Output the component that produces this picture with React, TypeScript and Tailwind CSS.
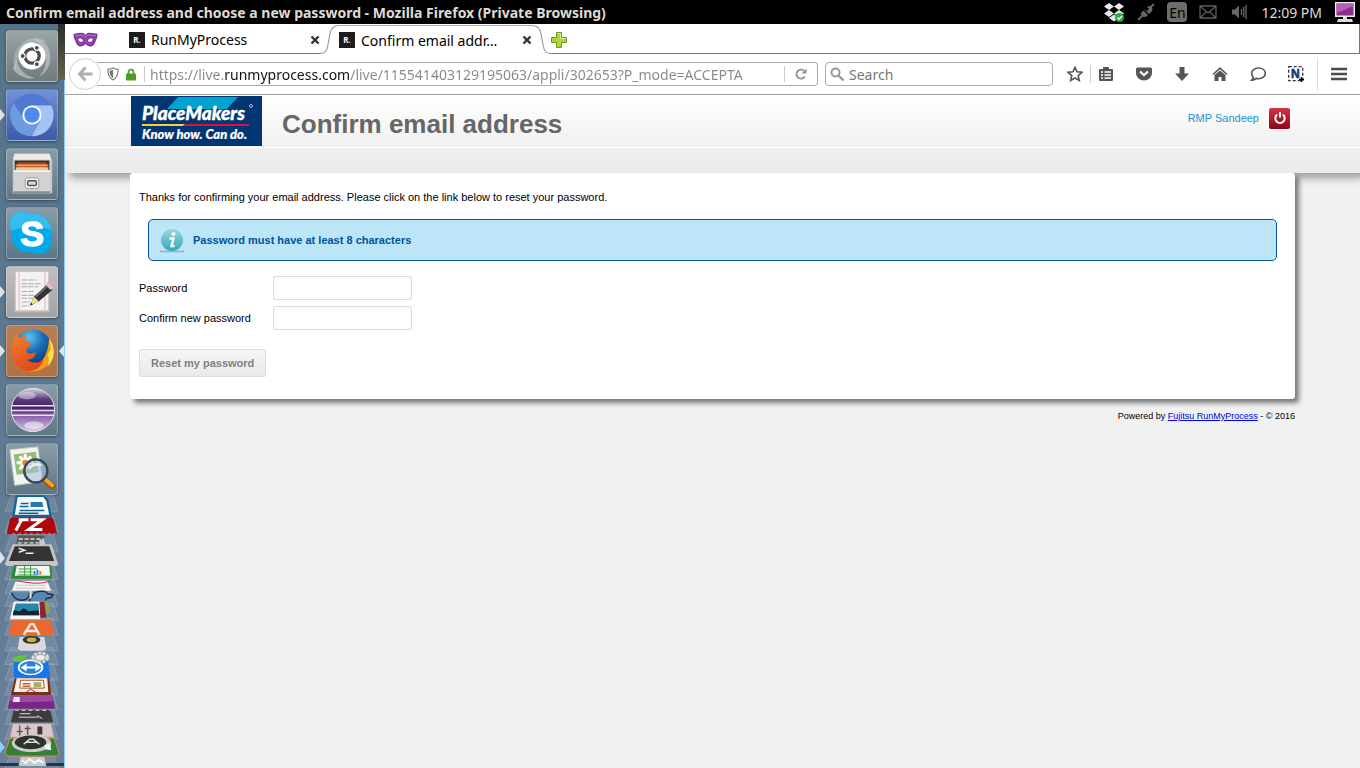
import { useState } from "react";
import type { ReactNode } from "react";

const glassTile = "from-[#8b9ca8] to-[#5d7787]";

function UbuntuIcon() {
  return (
    <svg viewBox="0 0 52 52" className="size-full">
      <path d="M26 8c13 0 20 9 19 22-1 9-6 15-12 18 6-7 8-12 7-20C39 17 33 12 26 8z" fill="#c9cfd0" opacity=".6" />
      <path d="M9 42C4 30 8 17 20 10c8-4 16-3 22 2-9-2-15-1-21 4-9 7-11 15-12 26z" fill="#c9cfd0" opacity=".45" />
      <path d="M10 30c2 10 9 17 20 19-9 2-19-2-24-10z" fill="#d7dbdb" opacity=".5" />
      <circle cx="26" cy="26" r="14" fill="#fff" />
      <circle cx="26" cy="26" r="7.500" fill="none" stroke="#4d4d4d" strokeWidth="3.400" />
      <g fill="#4d4d4d" stroke="#fff" strokeWidth="1.200">
        <circle cx="16.300" cy="26" r="2.600" />
        <circle cx="31" cy="17.500" r="2.600" />
        <circle cx="31" cy="34.500" r="2.600" />
      </g>
    </svg>
  );
}

function ChromiumIcon() {
  return (
    <svg viewBox="0 0 52 52" className="size-full">
      <circle cx="26" cy="26" r="22" fill="#6796de" />
      <path d="M26 4A22 22 0 0 1 46 16H26L16 27 7 14A22 22 0 0 1 26 4z" fill="#4f7ad0" />
      <path d="M26 16h20a22 22 0 0 1-20 32l9-17z" fill="#a5c3f5" />
      <path d="M7 14a22 22 0 0 0 18 34l9-15-18-4z" fill="#6e9ae0" />
      <circle cx="26" cy="26" r="10" fill="#fff" />
      <circle cx="26" cy="26" r="8" fill="#4f8af0" />
    </svg>
  );
}

function FilesIcon() {
  return (
    <svg viewBox="0 0 52 52" className="size-full">
      <path d="M8 5h36l3 7v34H6V12z" fill="#c9c9c9" />
      <path d="M8 5h36l2 6H6z" fill="#ececec" />
      <path d="M8 12h36v12H8z" fill="#3a3532" />
      <path d="M11 14h30v9H11z" fill="#b04a16" />
      <path d="M9 16h34v2H9z" fill="#f7a256" />
      <path d="M9 19h34v3H9z" fill="#f5c795" />
      <path d="M7 22h38v24H7z" fill="#d3d2d1" />
      <path d="M7 22h38v2H7z" fill="#f4f4f4" />
      <path d="M7 44h38v2H7z" fill="#8d8d8d" />
      <rect x="19" y="30" width="14" height="11" rx="2" fill="#f3f3f3" stroke="#999" />
      <rect x="21.500" y="33" width="9" height="5" rx="1" fill="#ddd" stroke="#555" strokeWidth="1.500" />
    </svg>
  );
}

function SkypeIcon() {
  return (
    <svg viewBox="0 0 52 52" className="size-full">
      <path d="M15 4c4 0 6 1 8 2 14-2 25 8 23 22 3 9-2 20-13 20-4 0-6-1-8-2C12 48 3 38 5 24 0 14 6 4 15 4z" fill="#00a9ea" />
      <path d="M15 4c4 0 6 1 8 2 12-2 22 6 23 17C34 18 18 18 5 24 0 14 6 4 15 4z" fill="#35bdf2" />
      <text x="26" y="39" textAnchor="middle" fontFamily="Liberation Sans, Arial, sans-serif" fontWeight="700" fontSize="37" fill="#fff" stroke="#fff" strokeWidth="1.400">S</text>
    </svg>
  );
}

function EditorIcon() {
  return (
    <svg viewBox="0 0 52 52" className="size-full">
      <rect x="8" y="5" width="36" height="42" fill="#bcbcbc" />
      <rect x="9" y="5" width="34" height="40" fill="#f3f3f1" />
      <path d="M12.500 5v40M39.500 5v40" stroke="#e0b3bb" />
      <path
        d="M15 13.500h16M15 17.500h20M15 20.500h18M15 25.500h14M15 29.500h19M15 32.500h12M15 36.500h9M15 40.500h8"
        stroke="#a9a9a9"
        strokeDasharray="6 1"
      />
      <path d="m24 40 4-9 14-13 5 6-14 12z" fill="#333" />
      <path d="m30 31 13-12" stroke="#777" strokeWidth="1.500" />
      <path d="m40 18 3-3 5 6-3 3z" fill="#c9ccd0" />
      <path d="m42 16 1-1c3-1 6 3 5 5l-1 1z" fill="#eba0c0" />
      <path d="m24 40 4-9 5 5z" fill="#e9e48a" />
      <path d="m24 40 1-3 2 2z" fill="#222" />
    </svg>
  );
}

function FirefoxIcon() {
  return (
    <svg viewBox="0 0 52 52" className="size-full">
      <defs>
        <radialGradient id="globe" cx=".4" cy=".2" r=".8">
          <stop offset="0" stopColor="#5fc4ec" />
          <stop offset=".45" stopColor="#1b6fb8" />
          <stop offset="1" stopColor="#0b2f66" />
        </radialGradient>
        <linearGradient id="fox" x1="0" y1="0" x2=".4" y2="1">
          <stop offset="0" stopColor="#f08030" />
          <stop offset="1" stopColor="#e04d1c" />
        </linearGradient>
      </defs>
      <circle cx="27" cy="24" r="20" fill="url(#globe)" />
      <path d="M44 12c7 11 5 24-4 31-9 6-22 6-30-1 11 3 24 0 29-10 4-7 4-13 5-20z" fill="#f39a1c" />
      <path d="M44 14c7 8 6 21-2 28 2-5 2-9 0-12 4-5 4-9 2-16z" fill="#fde14b" />
      <path d="M9 8c1 3 3 4 6 4 2-2 4-3 6-2-2 3-2 5 0 7 3 0 5 2 3 4-2 1-4 2-4 5 2 4 6 3 10 1-1 6-4 8-9 8 4 4 12 4 17 0-2 8-9 12-17 12C9 46 2 32 6 17c1-4 2-6 3-9z" fill="url(#fox)" />
    </svg>
  );
}

function EclipseIcon() {
  return (
    <svg viewBox="0 0 52 52" className="size-full">
      <defs>
        <linearGradient id="eclipse" x1="0" y1="0" x2="0" y2="1">
          <stop offset="0" stopColor="#ded3ea" />
          <stop offset=".25" stopColor="#5b3a7e" />
          <stop offset=".45" stopColor="#42246a" />
          <stop offset=".65" stopColor="#8b66ad" />
          <stop offset="1" stopColor="#dccbe8" />
        </linearGradient>
      </defs>
      <circle cx="27" cy="26" r="22.500" fill="url(#eclipse)" stroke="#e6deef" />
      <path d="M5 21.500h44M4 26.500h46M5 31.500h44" stroke="#e9e1f2" strokeWidth="1.600" />
      <ellipse cx="21" cy="11" rx="9" ry="4" fill="#fff" opacity=".4" />
      <ellipse cx="28" cy="42" rx="10" ry="4" fill="#fff" opacity=".5" />
    </svg>
  );
}

function ViewerIcon() {
  return (
    <svg viewBox="0 0 52 52" className="size-full">
      <path d="m3 6 29-3 5 36-29 4z" fill="#f3f4ef" stroke="#c8ccc8" />
      <path d="m7 11 23-3 3 21-23 3z" fill="#94b978" />
      <g fill="none" stroke="#fff" strokeWidth="3.500" strokeLinecap="round">
        <path d="M19 12v15M11.500 19.500h15M14 14l10 11M24 14 14 25" />
      </g>
      <circle cx="19" cy="19.500" r="3.200" fill="#e08a2c" />
      <path d="m39 37 8 7" stroke="#9c5a12" strokeWidth="7" strokeLinecap="round" />
      <path d="m40 37 7 6" stroke="#f0a53a" strokeWidth="4" strokeLinecap="round" />
      <circle cx="30" cy="28" r="12" fill="#a9bfd8" fillOpacity=".6" stroke="#3a4754" strokeWidth="2.500" />
      <path d="M22 26c3-7 11-8 16-3-6-1-11 0-16 3z" fill="#fff" opacity=".7" />
    </svg>
  );
}

const launchers = [
  { name: "Dash", icon: <UbuntuIcon />, tile: "from-[#9aa5a8] to-[#707b7c]" },
  { name: "Chromium", icon: <ChromiumIcon />, tile: "from-[#7590d6] to-[#3c5ba8]", running: true },
  { name: "Files", icon: <FilesIcon />, tile: glassTile },
  { name: "Skype", icon: <SkypeIcon />, tile: glassTile },
  { name: "Text Editor", icon: <EditorIcon />, tile: "from-[#c0c0c2] to-[#a3a3a5]", running: true },
  { name: "Firefox", icon: <FirefoxIcon />, tile: "from-[#b97e56] to-[#b07242]", running: true, focused: true },
  { name: "Eclipse", icon: <EclipseIcon />, tile: glassTile },
  { name: "Image Viewer", icon: <ViewerIcon />, tile: glassTile },
];

// launcher entries folded up at the bottom of the bar
const foldTops = [493, 514, 533, 547, 562, 576, 589, 603, 618, 634, 648, 664, 679, 694, 709, 724, 739, 754];

function FoldedStack() {
  return (
    <svg viewBox="0 495 65 273" className="h-[273px] w-full shrink-0" role="img" aria-label="More applications">
      {foldTops.map((y) => (
        <path key={y} d={`M11 ${y}h43l5 17H5z`} fill="#c6d6e2" fillOpacity=".14" stroke="#c6d6e2" strokeOpacity=".25" />
      ))}
      {/* writer */}
      <path d="M16 493h28l5 4 4 20H12z" fill="#17608f" />
      <path d="M18 495h26l3 4 3 14H15z" fill="#f5fafc" />
      <path d="M21 501.500h8M20 504.500h9M20 508.500h25M19 511.500h20" stroke="#17608f" strokeWidth="1.500" />
      <path d="M31 500h12l1 5H31z" fill="#2a7aa8" />
      {/* filezilla */}
      <path d="m10 517 2-1h41l2 3 3 14-3-2-2 2-3-2-3 2-3-2-3 2-3-2-3 2-3-2-3 2-3-2-3 2-3-2-3 2-3-2-3 2-4-1z" fill="#b0060c" />
      <path d="M19 518h10M22 518l-6 11M31 518h12l-14 10h14" fill="none" stroke="#fff" strokeWidth="3" />
      {/* calculator */}
      <path d="M18 534h27l2 12H16z" fill="#55585a" />
      <path d="M19 537.500h26M18 541.500h28" stroke="#b8bbbc" strokeWidth="2" strokeDasharray="4 2" />
      <path d="M40 538h5l1 6h-6z" fill="#b9cfdc" />
      {/* terminal */}
      <path d="M13 543h39l7 20-2 2H7l-2-2z" fill="#c6c6c6" />
      <path d="M15 545h35l5 15H9z" fill="#333" />
      <path d="m19 547 6 2-6 2M26 552h8" fill="none" stroke="#eee" strokeWidth="1.500" />
      {/* calc */}
      <path d="M14 564h38l1 14H11z" fill="#2f8a35" />
      <path d="M17 565h33l1 10H15z" fill="#f1f7ef" />
      <path d="M19 568h19M19 571h19M18 574h20M25 565v10M31 565v10" stroke="#3c9b3f" />
      <path d="M33 569h10v5H33z" fill="#fff" />
      <path d="M34 574v-4h2v4zM37 574v-5h2v5z" fill="#2f80c0" />
      <path d="M40 574v-4h2v4z" fill="#f07a1c" />
      {/* document viewer */}
      <path d="M16 580h32l4 10H12z" fill="#f5f3f2" />
      <path d="M15 580c12 1 24 5 36 0" fill="none" stroke="#d3262c" />
      <path d="M17 584.500h29M16 587.500h30" stroke="#c8c8c8" />
      {/* database client */}
      <path d="M12 592c2 7 9 9 14 7 3-1 4-4 4-7" fill="#5b86ad" stroke="#17344f" strokeWidth="1.500" />
      <path d="M35 592c5-2 12-2 13 1l6 1-2 3-5 1-2 8H33l-3-6z" fill="#5b86ad" stroke="#17344f" strokeWidth="1.500" />
      <path d="M31 590v8" stroke="#dfe8f0" strokeWidth="2" />
      {/* shotwell */}
      <path d="m40 601 8-1 4 12-10 5z" fill="#8f9f55" />
      <path d="m38 602 7-1 2 16-8 1z" fill="#8c2530" />
      <path d="M14 601h26l1 18H10z" fill="#f5f5f5" />
      <path d="M16 603h23l1 12H13z" fill="#2686ad" />
      <path d="m13 615 1-5 6 1 4-3 5 3 10-1 1 5z" fill="#13252f" />
      {/* software center */}
      <path d="M12 620h40l3 16H9z" fill="#e9692c" />
      <path d="m24 635 7-11h3l6 11M26 631h12" fill="none" stroke="#f9e9df" strokeWidth="2.500" />
      {/* sound recorder */}
      <path d="M20 637h25l2 12-3 2H21l-3-2z" fill="#dadada" />
      <ellipse cx="32" cy="640" rx="9" ry="4" fill="#333" />
      <ellipse cx="32" cy="640" rx="5" ry="2.500" fill="#c7b53f" />
      {/* teamviewer */}
      <path d="M14 661h35l2 19-37-2z" fill="#1577e6" />
      <path d="M12 660c5-6 9-3 15-5-1 5-6 9-13 7z" fill="#62c63c" />
      <ellipse cx="31" cy="668" rx="13" ry="8" fill="#fff" />
      <ellipse cx="31" cy="668" rx="11" ry="6.500" fill="#2583dc" />
      <path d="m21 668 6-4v3h9v-3l6 4-6 4v-3h-9v3z" fill="#fff" />
      <ellipse cx="41" cy="658" rx="7" ry="4" fill="none" stroke="#d9d9d9" strokeWidth="4" strokeDasharray="3 1" />
      <ellipse cx="41" cy="658" rx="5" ry="3" fill="#eee" stroke="#aaa" />
      {/* impress */}
      <path d="M15 679h35l2 17H11z" fill="#7a3019" />
      <path d="M17 679h31l1 14H14z" fill="#f7efe9" />
      <path d="M21 681h23l1 8H20z" fill="#fff" stroke="#a9502c" />
      <path d="M23 684.500h8M23 687h8" stroke="#c5602c" strokeWidth="1.500" />
      <path d="M34 683h8v5h-8z" fill="#a4b45d" />
      <path d="m27 693 4-3 5 3" fill="none" stroke="#7a3019" />
      {/* workspace */}
      <path d="M11 696h42l3 14H8z" fill="#7a2685" />
      <path d="M11 696h42l1 6c-14 1-28 2-44 0z" fill="#9c4aa5" />
      <path d="M14 698h6v5h-7z" fill="#f7e6f7" />
      {/* video editor */}
      <path d="M14 711h37l3 13H11z" fill="#3a3c3e" />
      <path d="M15 711.500h36" stroke="#e9e9e9" strokeDasharray="4 3" />
      <path d="M20 715h11M19 718.500h20M38 717l5 3" stroke="#dedede" />
      {/* settings */}
      <path d="M13 725h39l3 14H10z" fill="#d9c8c9" stroke="#a99697" />
      <path d="M20 727v10M28 727v10M17 733h6M25 730h6" stroke="#5d5355" strokeWidth="1.500" />
      <path d="M38 728h5v8h-5z" fill="#363636" />
      {/* updater */}
      <path d="M10 740h45l5 15-2 3H7l-2-3z" fill="#348038" stroke="#d28a45" />
      <ellipse cx="32" cy="745" rx="20" ry="9" fill="#c9ccc9" />
      <ellipse cx="31" cy="744" rx="16" ry="7" fill="#2f3330" />
      <path d="m24 746 6-5h4l6 5M27 744h10" fill="none" stroke="#ddd" strokeWidth="1.500" />
      <path d="m45 747 6-2 1 7-6-1z" fill="#f5f5f5" />
      {/* trash */}
      <path d="M21 759h24l2 9H19z" fill="#c7cbca" />
      <path d="m22 762 4 3 4-4 5 4 5-3 4 3" fill="none" stroke="#f5f5f5" strokeWidth="2" />
      <path d="M0 765h19v3H0zM47 765h18v3H47z" fill="#2b3440" />
      <path d="m0 550 5 7-5 6z" fill="#dde3e7" />
      <path d="m0 743 5 6-5 6z" fill="#8fd0fa" />
    </svg>
  );
}

function Launcher() {
  return (
    <aside className="relative flex w-[65px] shrink-0 flex-col border-r border-[#8ecbff] bg-linear-to-b from-[#53748a] to-[#687f99]">
      {/* bit of wallpaper showing through */}
      <span className="absolute top-0 -right-px h-14 w-[7px] bg-linear-to-b from-[#2b2d2b] to-[#66644f]" />
      <div className="flex flex-col items-center gap-[7px] pt-1.5">
        {launchers.map((app) => (
          <div key={app.name} className="flex h-[52px] w-full items-center justify-between">
            <svg viewBox="0 0 5 14" className="h-3.5 w-[5px]">
              {app.running && <path d="m0 1 5 6-5 6z" fill="#dde3e7" />}
            </svg>
            <button
              aria-label={app.name}
              className={`size-[52px] overflow-hidden rounded border border-white/25 bg-linear-to-b shadow-[0_1px_3px_rgba(0,0,0,0.4)] ${app.tile}`}
            >
              {app.icon}
            </button>
            <svg viewBox="0 0 5 14" className="h-3.5 w-[5px]">
              {app.focused && <path d="M5 1 0 7l5 6z" fill="#dde3e7" />}
            </svg>
          </div>
        ))}
      </div>
      <FoldedStack />
    </aside>
  );
}

function MenuBar() {
  return (
    <header className="flex h-6 shrink-0 items-center bg-black pr-1 pl-1.5 text-[#dfdbd2]">
      <h1 className="flex-1 truncate text-[14px] font-bold">
        Confirm email address and choose a new password - Mozilla Firefox (Private Browsing)
      </h1>
      <div className="flex items-center">
        <svg viewBox="0 0 22 22" className="mr-3 size-[22px]">
          <path
            d="m6 2 5 3.500L6 9 1 5.500zM16 2l5 3.500L16 9l-5-3.500zM6 9l5 3.500L6 16l-5-3.500zM16 9l5 3.500-5 3.500-5-3.500zM6 17l5-3.500 5 3.500-5 3.500z"
            fill="#e8e8e8"
          />
          <circle cx="16.500" cy="16.500" r="4.500" fill="#2da83a" />
          <path d="m14.500 16.500 1.500 1.700 3-3.200" fill="none" stroke="#fff" strokeWidth="1.300" />
        </svg>
        <svg viewBox="0 0 18 18" className="mr-3 size-[18px]">
          <path d="M1 17 5 13M13 5l4-4" stroke="#686868" strokeWidth="1.800" />
          <path d="m4 10 4-4 2 2 2-2-2-2 2-1c3 0 4 3 3 5l-5 5c-2 2-5 1-6-1z" fill="#686868" />
          <path d="m6 6 6 6" stroke="#000" strokeWidth="1.500" />
        </svg>
        <span className="mr-3 flex h-5 w-5 items-center justify-center rounded-sm bg-[#6d6d6d] text-[14px] text-black">En</span>
        <svg viewBox="0 0 18 14" className="mr-3.5 h-3.5 w-[18px]" fill="none" stroke="#5e5e5e" strokeWidth="1.300">
          <path d="M1 1h16v12H1zM2 2l7 6 7-6M2 12l5-5M16 12l-5-5" />
        </svg>
        <svg viewBox="0 0 16 16" className="mr-3.5 size-4">
          <path d="M1 5.500h3l4-4v13l-4-4H1z" fill="#686868" />
          <path d="M10.500 5v6M12.800 3v10M15 1v14" stroke="#686868" strokeWidth="1.300" />
        </svg>
        <span className="mr-3 text-[14px] text-[#dcdcdc]">12:09 PM</span>
        <svg viewBox="0 0 22 22" className="size-[22px]">
          <rect x="1" y="1" width="20" height="15" fill="#eee" />
          <rect x="2.500" y="2.500" width="17" height="12" fill="#8c2f8c" />
          <path d="M2.500 2.500h17v3c-7 1-10 5-17 6z" fill="#b264b0" />
          <path d="M9 16h4v2h5l1 3H3l1-3h5z" fill="#ddd" />
        </svg>
      </div>
    </header>
  );
}

function Favicon() {
  return (
    <span className="flex size-4 shrink-0 items-center justify-center bg-[#1c1c1c] text-[8px] leading-none font-bold text-white">
      R<span className="text-[#e0b020]">.</span>
    </span>
  );
}

function TabClose() {
  return (
    <button aria-label="Close tab" className="shrink-0">
      <svg viewBox="0 0 10 10" className="size-2.5" stroke="#333" strokeWidth="2.400">
        <path d="m1.500 1.500 7 7M8.500 1.500l-7 7" />
      </svg>
    </button>
  );
}

function TabStrip() {
  return (
    <div className="flex h-[30px] text-[14px] text-black">
      <div className="flex w-[255px] items-center border-b border-[#777] pt-0.5">
        <svg viewBox="0 0 26 18" className="mr-[31px] ml-2 h-[18px] w-[25px]">
          <path d="M1 3c3 0 5-1 8-1 2 0 3 1 4 2 1-1 2-2 4-2 3 0 5 1 8 1 0 3-1 5-2 7-1 4-3 6-6 5-2 0-3-2-4-2s-2 2-4 2c-3 1-5-1-6-5C2 8 1 6 1 3z" fill="#8e3fb0" stroke="#5c2480" />
          <path d="M2 4c3 1 5-1 8 0 1 0 2 1 3 2 1-1 2-2 3-2 3-1 5 1 8 0" fill="none" stroke="#c07bdb" />
          <path d="M5 8c2-2 5-1 6 2-2 2-5 2-6-2zM21 8c-2-2-5-1-6 2 2 2 5 2 6-2z" fill="#fff" stroke="#5c2480" strokeWidth=".7" />
        </svg>
        <Favicon />
        <span className="ml-1.5 flex-1">RunMyProcess</span>
        <TabClose />
      </div>
      <svg viewBox="0 0 19 30" className="h-[30px] w-[19px]" fill="none" stroke="#9aa0a8" strokeWidth="1.200">
        <path d="M0 29.500c6 0 7-3 8-9l2-11c1-5 3-8 9-8" />
      </svg>
      <div className="mt-px flex w-[193px] items-center border-t border-[#aaa]">
        <Favicon />
        <span className="ml-1.5 flex-1">Confirm email addr…</span>
        <TabClose />
      </div>
      <svg viewBox="0 0 19 30" className="h-[30px] w-[19px]" fill="none" stroke="#9aa0a8" strokeWidth="1.200">
        <path d="M19 29.500c-6 0-7-3-8-9l-2-11c-1-5-3-8-9-8" />
      </svg>
      <div className="flex flex-1 items-center border-r border-b border-[#777] pt-0.5">
        <button aria-label="New tab">
          <svg viewBox="0 0 16 16" className="size-4">
            <path d="M5.500.5h5v5h5v5h-5v5h-5v-5h-5v-5h5z" fill="#b2d235" stroke="#6d9a20" />
            <path d="M6.500 1.500h3v5h5" fill="none" stroke="#dcec9a" />
          </svg>
        </button>
      </div>
    </div>
  );
}

function ToolButton({ label, children }: { label: string; children: ReactNode }) {
  return (
    <button aria-label={label} className="flex w-[38px] shrink-0 justify-center">
      <svg viewBox="0 0 16 16" className="size-4" fill="#555">
        {children}
      </svg>
    </button>
  );
}

function NavBar() {
  const [url, setUrl] = useState("https://live.runmyprocess.com/live/115541403129195063/appli/302653?P_mode=ACCEPTA");

  return (
    <div className="flex h-[41px] items-center border-b border-[#aaa] pl-1 text-[14px]">
      <button aria-label="Back" className="z-10 -mr-1 flex size-8 shrink-0 items-center justify-center rounded-full border border-[#d0d0d0] bg-white">
        <svg viewBox="0 0 16 16" className="size-4" fill="none" stroke="#b0b0b0" strokeWidth="3">
          <path d="M8.500 1.500 2.500 8l6 6.500M3 8h12.500" />
        </svg>
      </button>
      <div className="flex h-6 flex-1 items-center rounded-r-sm border border-l-0 border-[#aaa]">
        <svg viewBox="0 0 14 16" className="ml-2.5 h-3.5 w-3 shrink-0">
          <path d="M7 1c2 1 4 1.500 6 1.500 0 6-1 10-6 12.500C2 12.500 1 8.500 1 2.500 3 2.500 5 2 7 1z" fill="#fff" stroke="#777" strokeWidth="1.300" />
          <path d="M7 3v10C4 11 3 8 3 4c2 0 3-.5 4-1z" fill="#777" />
        </svg>
        <svg viewBox="0 0 10 13" className="ml-[7px] h-[13px] w-2.5 shrink-0">
          <path d="M2.500 6V4a2.500 2.500 0 0 1 5 0v2" fill="none" stroke="#4b9a28" strokeWidth="1.700" />
          <rect y="5.500" width="10" height="7" rx="1" fill="#4b9a28" />
        </svg>
        <span className="ml-2 h-4 w-px bg-[#ccc]" />
        {/* the domain part of the address is darker than the rest */}
        <input
          aria-label="Address"
          value={url}
          onChange={(e) => setUrl(e.target.value)}
          className="ml-[5px] min-w-0 flex-1 bg-[linear-gradient(90deg,#888_74px,#111_74px,#111_199px,#888_199px)] bg-clip-text text-transparent outline-none"
        />
        <span className="h-4 w-px bg-[#ccc]" />
        <button aria-label="Reload" className="px-2.5">
          <svg viewBox="0 0 12 12" className="size-3">
            <path d="M9.800 8.500A4.500 4.500 0 1 1 9 2.800" fill="none" stroke="#8b97a5" strokeWidth="1.900" />
            <path d="M11.500.5v5h-5z" fill="#8b97a5" />
          </svg>
        </button>
      </div>
      <div className="ml-[7px] flex h-6 w-[228px] items-center rounded-sm border border-[#aaa] pl-1">
        <svg viewBox="0 0 14 14" className="size-3.5 shrink-0" fill="none" stroke="#999">
          <circle cx="5.500" cy="5.500" r="4" strokeWidth="2" />
          <path d="m8.500 8.500 5 5" strokeWidth="2.400" />
        </svg>
        <input type="search" aria-label="Search" placeholder="Search" className="ml-[5px] min-w-0 flex-1 outline-none placeholder:text-[#777]" />
      </div>
      <div className="ml-[3px] flex items-center pr-0.5">
        <ToolButton label="Bookmark this page">
          <path d="m8 1.300 2 4.500 4.900.5-3.700 3.300 1.100 4.900L8 12l-4.300 2.500 1.100-4.900L1.100 6.300 6 5.800z" fill="none" stroke="#555" strokeWidth="1.600" />
        </ToolButton>
        <span className="-mx-1 h-[18px] w-px bg-[#ccc]" />
        <ToolButton label="Bookmarks">
          <path d="M2 3h3V1.500A1 1 0 0 1 6 1h4a1 1 0 0 1 1 .5V3h3a1 1 0 0 1 1 1v10a1 1 0 0 1-1 1H2a1 1 0 0 1-1-1V4a1 1 0 0 1 1-1z" />
          <path d="M3 6h2M6.500 6H13M3 9h2M6.500 9H13M3 12h2M6.500 12H13" stroke="#fff" strokeWidth="1.700" />
        </ToolButton>
        <ToolButton label="Pocket">
          <path d="M1.500 1.500h13A1.500 1.500 0 0 1 16 3v4A8 7.500 0 0 1 0 7V3a1.500 1.500 0 0 1 1.500-1.500z" />
          <path d="M4 5.500 8 9l4-3.500" fill="none" stroke="#fff" strokeWidth="2.200" />
        </ToolButton>
        <ToolButton label="Downloads">
          <path d="M5.500 1h5v6.500H15L8 15 1 7.500h4.500z" />
        </ToolButton>
        <ToolButton label="Home">
          <path d="m8 1 7.500 7-1 1L8 3.200 1.500 9l-1-1z" />
          <path d="M8 4.500 13.500 9v6H9.500v-4h-3v4h-4V9z" />
        </ToolButton>
        <ToolButton label="Hello">
          <path d="M8.500 2c4 0 6.800 2.300 6.800 5.300s-2.800 5.400-6.800 5.400c-1 0-1.500-.1-2.300-.3-1.200 1.200-2.700 1.800-4.500 1.700 1-.9 1.600-1.800 1.700-2.800C2.200 10.300 1.600 9 1.600 7.300 1.600 4.300 4.500 2 8.500 2z" fill="none" stroke="#555" strokeWidth="1.600" />
        </ToolButton>
        <ToolButton label="Clipper">
          <path d="M.7.700h14v14H.7z" fill="none" stroke="#333" strokeWidth="1.300" strokeDasharray="3 2" />
          <text x="3" y="12" fontFamily="Liberation Sans, Arial, sans-serif" fontWeight="700" fontSize="12" fill="#123a86" stroke="#123a86" strokeWidth=".6">N</text>
          <path d="M13.500 11v5M11 13.500h5" stroke="#000" strokeWidth="1.500" />
        </ToolButton>
        <span className="mr-0.5 ml-0.5 h-8 w-px bg-[#ddd]" />
        <ToolButton label="Menu">
          <path d="M0 3h16M0 8h16M0 13h16" stroke="#4a4a4a" strokeWidth="2.600" />
        </ToolButton>
      </div>
    </div>
  );
}

function PlaceMakersLogo() {
  return (
    <svg viewBox="0 0 131 50" className="h-[50px] w-[131px] shrink-0" role="img" aria-label="PlaceMakers">
      <rect width="131" height="50" fill="#023673" />
      <path d="M47 1h60L96 13H36z" fill="#00a3cf" />
      <g fontFamily="Lato, sans-serif" fontStyle="italic" fontWeight="900" fill="#fff" stroke="#fff">
        <text x="11" y="24" fontSize="19" strokeWidth=".4">PlaceMakers</text>
        <text x="11" y="43" fontSize="13" strokeWidth=".2">Know how. Can do.</text>
      </g>
      <circle cx="120" cy="10" r="1.500" fill="none" stroke="#cdd9e8" strokeWidth=".8" />
      <path d="M11 28h43l-2 2H11z" fill="#f6d23a" />
      <path d="M54 28h64v2H52z" fill="#d3153d" />
    </svg>
  );
}

function Page() {
  return (
    <main className="flex-1 bg-[#f1f1f1] font-['Liberation_Sans',Arial,sans-serif] text-[11px] text-black">
      <header className="shadow-[5px_5px_8px_rgba(0,0,0,0.35)]">
        <div className="flex h-[53px] items-center border-b border-white bg-linear-to-b from-white to-[#f0f0f0] px-[66px]">
          <PlaceMakersLogo />
          <h2 className="ml-5 flex-1 pt-1.5 text-[26px] leading-8 font-bold text-[#666]">Confirm email address</h2>
          <div className="mr-1 flex items-center gap-2.5 pb-1.5">
            <a href="#profile" className="text-[#1c94d2]">RMP Sandeep</a>
            <button aria-label="Log out" className="flex size-[21px] items-center justify-center rounded-xs bg-linear-to-b from-[#d9304a] to-[#8c0414]">
              <svg viewBox="0 0 14 14" className="size-3.5" fill="none" stroke="#fff" strokeWidth="2">
                <path d="M4.200 3.500a4.700 4.700 0 1 0 5.600 0M7 1v5.500" />
              </svg>
            </button>
          </div>
        </div>
        <div className="h-[25px] bg-linear-to-b from-[#f0f0f0] to-[#ebebeb]" />
      </header>

      <div className="relative mx-[65px]">
        <form
          className="rounded-[3px] bg-white px-[9px] pt-4 pb-[22px] shadow-[4px_4px_5px_rgba(0,0,0,0.5)]"
          onSubmit={(e) => e.preventDefault()}
        >
          <p className="leading-4">Thanks for confirming your email address. Please click on the link below to reset your password.</p>
          <div className="mx-[9px] mt-3.5 mb-[15px] flex h-[42px] items-center rounded-[5px] border border-[#00529b] bg-[#bde5f8] pl-2.5 font-bold text-[#00529b]">
            <svg viewBox="0 0 26 26" className="mr-2 size-[26px]">
              <defs>
                <linearGradient id="info" x1="0" y1="0" x2="0" y2="1">
                  <stop offset="0" stopColor="#9bd8dc" />
                  <stop offset="1" stopColor="#2fa9b9" />
                </linearGradient>
              </defs>
              <path d="M1 24.500h24" stroke="#8fb3c2" strokeWidth="1.500" />
              <circle cx="13" cy="13" r="11" fill="url(#info)" />
              <circle cx="14.500" cy="7" r="2" fill="#fff" />
              <path d="M10.500 11.500h4l-2 7.500h3" fill="none" stroke="#fff" strokeWidth="2.400" />
            </svg>
            Password must have at least 8 characters
          </div>
          <div className="grid grid-cols-[134px_139px] items-center gap-y-1.5">
            <label htmlFor="password">Password</label>
            <input id="password" type="password" className="h-6 rounded-xs border border-[#ddd] bg-white px-1 shadow-[inset_0_0_3px_rgba(0,0,0,0.05)]" />
            <label htmlFor="confirm">Confirm new password</label>
            <input id="confirm" type="password" className="h-6 rounded-xs border border-[#ddd] bg-white px-1 shadow-[inset_0_0_3px_rgba(0,0,0,0.05)]" />
          </div>
          <button className="mt-[19px] h-7 rounded-xs border border-[#ddd] bg-linear-to-b from-[#f6f6f6] to-[#e9e9e9] px-[11px] font-bold text-[#808080]">
            Reset my password
          </button>
        </form>
        <footer className="mt-[11px] text-right text-[9px] leading-3">
          Powered by <a href="#runmyprocess" className="text-[#0000ee] underline">Fujitsu RunMyProcess</a> - © 2016
        </footer>
      </div>
    </main>
  );
}

export default function App() {
  return (
    <div className="flex min-h-screen flex-col font-['Noto_Sans',sans-serif]">
      <MenuBar />
      <div className="flex flex-1">
        <Launcher />
        <div className="flex min-w-0 flex-1 flex-col bg-white">
          <TabStrip />
          <NavBar />
          <Page />
        </div>
      </div>
    </div>
  );
}
